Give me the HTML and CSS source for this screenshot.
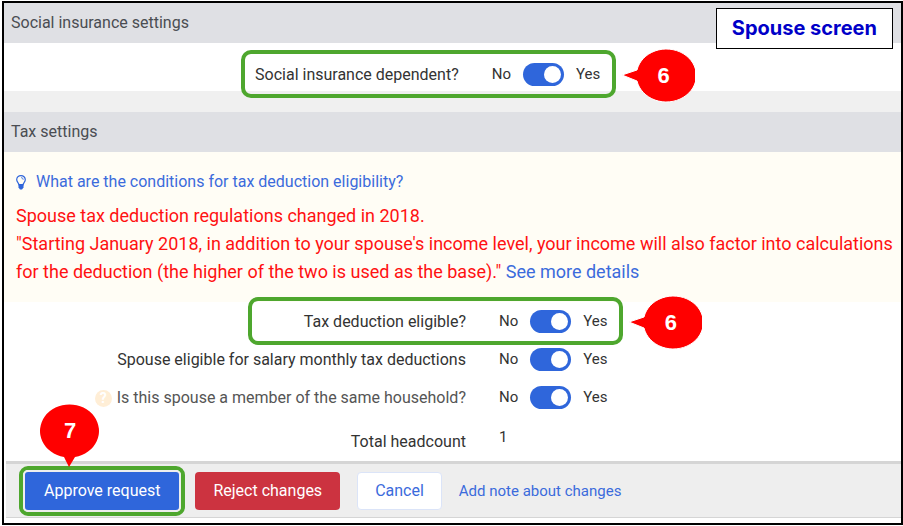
FILE: index.html
```html
<!DOCTYPE html>
<html lang="en">
<head>
<meta charset="UTF-8">
<meta name="viewport" content="width=device-width, initial-scale=1.0">
<title>Spouse screen</title>
<link rel="stylesheet" href="styles.css">
</head>
<body>
<div class="frame">
  <div class="screen-tag">Spouse screen</div>

  <h2 class="section-title">Social insurance settings</h2>
  <div class="social">
    <div class="field field-social">
      <label class="field-label" for="social">Social insurance dependent?</label>
      <div class="field-control">
        <span>No</span>
        <input type="checkbox" class="toggle" id="social" checked>
        <span>Yes</span>
      </div>
      <div class="ring">
        <div class="callout callout-side">
          <svg width="74" height="56" viewBox="0 0 74 56"><path d="M1 27L16 22A30 26.500 0 1 1 16 33Z" fill="#f00" stroke="#fff"/></svg>
          <span>6</span>
        </div>
      </div>
    </div>
  </div>

  <h2 class="section-title">Tax settings</h2>
  <div class="notice">
    <a href="#" class="hint">
      <svg width="10" height="15" viewBox="0 0 10 15"><path d="M3 10C3 8 .7 7 .7 4.700A4.300 4.100 0 0 1 9.300 4.700C9.300 7 7 8 7 10Z" fill="none" stroke="#2f65da" stroke-width="1.200"/><path d="M5 2.600Q7.200 2.600 7.200 4.800" fill="none" stroke="#2f65da" stroke-width=".8"/><path d="M2.500 9h5v3.500L6 14.500H4L2.500 12.500Z" fill="#2f65da"/></svg>
      What are the conditions for tax deduction eligibility?
    </a>
    <p>Spouse tax deduction regulations changed in 2018.</p>
    <p>"Starting January 2018, in addition to your spouse's income level, your income will also factor into calculations</p>
    <p>for the deduction (the higher of the two is used as the base)." <a href="#">See more details</a></p>
  </div>

  <div class="tax">
    <div class="field">
      <label class="field-label" for="eligible">Tax deduction eligible?</label>
      <div class="field-control">
        <span>No</span>
        <input type="checkbox" class="toggle" id="eligible" checked>
        <span>Yes</span>
      </div>
      <div class="ring">
        <div class="callout callout-side">
          <svg width="74" height="56" viewBox="0 0 74 56"><path d="M1 27L16 22A30 26.500 0 1 1 16 33Z" fill="#f00" stroke="#fff"/></svg>
          <span>6</span>
        </div>
      </div>
    </div>
    <div class="field">
      <label class="field-label" for="monthly">Spouse eligible for salary monthly tax deductions</label>
      <div class="field-control">
        <span>No</span>
        <input type="checkbox" class="toggle" id="monthly" checked>
        <span>Yes</span>
      </div>
    </div>
    <div class="field">
      <label class="field-label muted" for="household"><span class="help">?</span>Is this spouse a member of the same household?</label>
      <div class="field-control">
        <span>No</span>
        <input type="checkbox" class="toggle" id="household" checked>
        <span>Yes</span>
      </div>
    </div>
    <div class="field field-total">
      <span class="field-label">Total headcount</span>
      <div class="field-control">1</div>
    </div>
  </div>

  <div class="actions">
    <div class="approve">
      <button type="button" class="btn btn-primary">Approve request</button>
      <div class="callout callout-down">
        <svg width="62" height="64" viewBox="0 0 62 64"><path d="M30 63L25 53A29.500 26.500 0 1 1 36 53Z" fill="#f00"/></svg>
        <span>7</span>
      </div>
    </div>
    <button type="button" class="btn btn-danger">Reject changes</button>
    <button type="button" class="btn btn-cancel">Cancel</button>
    <a href="#" class="note">Add note about changes</a>
  </div>
</div>
</body>
</html>
```

FILE: styles.css
```css
* {
  box-sizing: border-box;
}
body {
  margin: 0;
  padding: 1px 0 1px 2px;
  background-color: #fff;
  color: #333;
  font-family: Roboto, sans-serif;
  font-size: 16px;
}
a {
  color: #3b6bdc;
  text-decoration: none;
}
.frame {
  position: relative;
  border: 2px solid #000;
  padding-bottom: 5px;
}
.screen-tag {
  position: absolute;
  top: 5px;
  right: 8px;
  z-index: 1;
  padding: 0 15px;
  border: 1px solid #000;
  background-color: #fff;
  color: #0000c8;
  font-family: Inter, sans-serif;
  font-size: 20px;
  font-weight: bold;
  line-height: 39px;
}
.section-title {
  margin: 0;
  padding: 0 7px;
  background-color: #dfe0e4;
  color: #4a4d52;
  font-size: 16px;
  font-weight: normal;
  line-height: 40px;
}

/* label / toggle rows */
.social {
  padding: 12px 0 19px;
  background: linear-gradient(#fff 48px, #f0f0f0 48px);
}
.field {
  position: relative;
  display: grid;
  grid-template-columns: 51.5% 1fr;
  align-items: center;
  column-gap: 33px;
  height: 38px;
}
.field-social {
  margin-right: 14px;
}
.field-label {
  text-align: right;
}
.muted {
  color: #555;
}
.field-control {
  display: flex;
  align-items: center;
  gap: 12px;
  font-size: 15px;
}
.toggle {
  appearance: none;
  position: relative;
  width: 41px;
  height: 23px;
  margin: 0;
  border-radius: 12px;
  background-color: #2f66db;
}
.toggle::before {
  content: "";
  position: absolute;
  top: 3px;
  right: 3px;
  width: 17px;
  height: 17px;
  border-radius: 50%;
  background-color: #fff;
}
.help {
  display: inline-block;
  width: 17px;
  margin-right: 5px;
  border-radius: 50%;
  background-color: #ffeed6;
  color: #fff;
  font-size: 14px;
  font-weight: bold;
  line-height: 17px;
  text-align: center;
}

/* yellow notice */
.notice {
  padding: 16px 0 16px 12px;
  background-color: #fffdf5;
  color: #f11;
  font-size: 18px;
  line-height: 28px;
}
.notice p {
  margin: 0;
}
.hint {
  display: flex;
  align-items: center;
  gap: 10px;
  margin-bottom: 6px;
  font-size: 16px;
}
.tax {
  padding-bottom: 3px;
}
.field-total {
  height: 42px;
}
.field-total .field-label {
  padding-top: 8px;
}

/* step markers */
.ring {
  position: absolute;
  top: -5px;
  left: calc(51.5% - 218px);
  width: 375px;
  height: 48px;
  border: 4px solid #4ea72e;
  border-radius: 10px;
  pointer-events: none;
}
.callout {
  position: absolute;
  color: #fff;
  font-family: "Liberation Sans", sans-serif;
  font-size: 22px;
  font-weight: bold;
  line-height: 24px;
  text-align: center;
}
.callout svg {
  display: block;
}
.callout span {
  position: absolute;
  right: 0;
  width: 62px;
}
.callout-side {
  top: -6px;
  left: 376px;
}
.callout-side span {
  top: 16px;
}
.callout-down {
  top: -66px;
  left: 16px;
}
.callout-down span {
  top: 15px;
}

/* bottom bar */
.actions {
  display: flex;
  align-items: center;
  height: 57px;
  margin-left: 2px;
  padding-left: 13px;
  border-top: 3px solid #d5d5d5;
  border-bottom: 1px solid #d5d5d5;
  background-color: #eee;
}
.approve {
  position: relative;
  margin-right: 10px;
  border: 4px solid #4ea72e;
  border-radius: 9px;
}
.btn {
  height: 38px;
  padding: 0 17px;
  border: 1px solid transparent;
  border-radius: 4px;
  color: #fff;
  font-family: inherit;
  font-size: 16px;
}
.approve .btn {
  display: block;
  height: 42px;
  padding: 0 19px;
  border: 2px solid #eee;
  border-radius: 5px;
}
.btn-primary {
  background-color: #2f66db;
}
.btn-danger {
  background-color: #cc3340;
}
.btn-cancel {
  margin: 0 17px;
  border-color: #dbe4f8;
  background-color: #fff;
  color: #3b6bdc;
}
.note {
  font-size: 15px;
}
```
